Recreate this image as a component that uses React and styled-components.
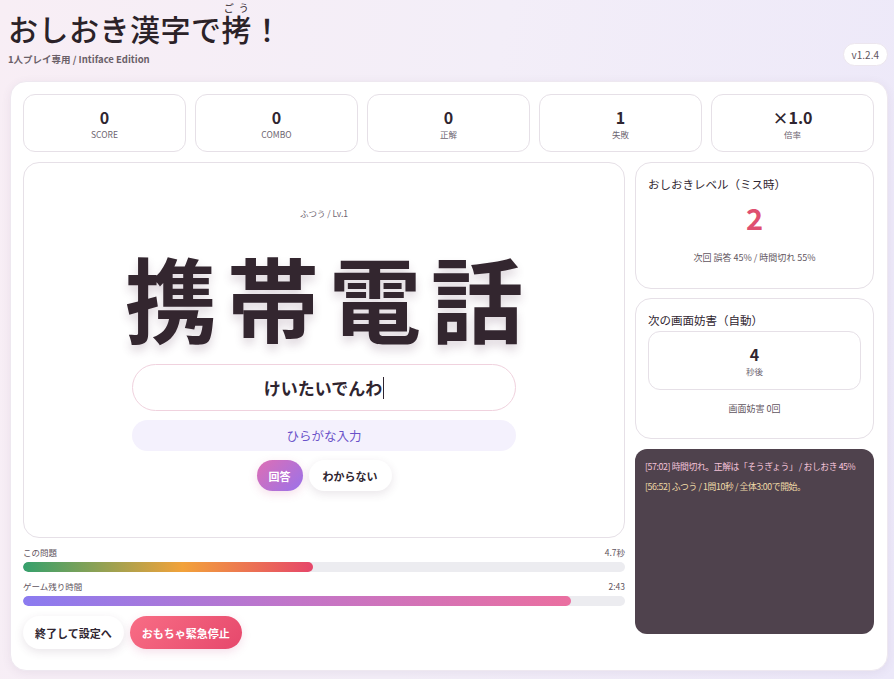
import styled, { createGlobalStyle } from 'styled-components';

const GlobalStyle = createGlobalStyle`
  html, body {
    margin: 0;
    padding: 0;
  }
  body {
    font-family: "Noto Sans CJK JP", "Noto Sans", sans-serif;
    color: #2f2530;
    background: linear-gradient(100deg, #f8eef5 0%, #f3eef8 50%, #ece8f9 100%);
    min-height: 679px;
  }
  * {
    box-sizing: border-box;
  }
`;

const Page = styled.div`
  padding: 0 6px 10px 10px;
`;

const Header = styled.header`
  display: flex;
  justify-content: space-between;
  align-items: flex-end;
  height: 81px;
  padding-bottom: 15px;
`;

const TitleBlock = styled.div`
  margin-left: -2px;
`;

const Title = styled.h1`
  margin: 0;
  font-size: 30px;
  font-weight: 500;
  line-height: 44px;
  letter-spacing: 0.5px;
  color: #2b2228;

  rt {
    font-size: 10px;
    font-weight: 400;
    letter-spacing: 1px;
  }
`;

const Subtitle = styled.div`
  font-size: 9.5px;
  font-weight: 600;
  color: #6a5f68;
  margin-top: 2px;
`;

const Version = styled.div`
  padding: 3px 8px;
  font-size: 10px;
  color: #5f5560;
  background: #fff;
  border: 1px solid #ece6ee;
  border-radius: 12px;
`;

const Card = styled.main`
  background: #fff;
  border-radius: 16px;
  box-shadow: 0 2px 10px rgba(90, 60, 100, 0.08);
  border: 1px solid #eee8f0;
  padding: 12px 13px 21px 12px;
  display: flex;
  flex-direction: column;
  gap: 10px;
`;

const Stats = styled.div`
  display: grid;
  grid-template-columns: repeat(5, 1fr);
  gap: 9px;
`;

const Stat = styled.div`
  height: 58px;
  border: 1px solid #e6e0e7;
  border-radius: 12px;
  display: flex;
  flex-direction: column;
  align-items: center;
  justify-content: center;
  padding-top: 2px;
`;

const StatValue = styled.div`
  font-size: 16px;
  font-weight: 600;
  line-height: 20px;
  color: #2f2530;
`;

const StatLabel = styled.div`
  font-size: 8.5px;
  color: #6d6470;
  line-height: 14px;
`;

const Body = styled.div`
  display: grid;
  grid-template-columns: 1fr 239px;
  gap: 10px;
`;

const LeftCol = styled.div`
  display: flex;
  flex-direction: column;
`;

const GamePanel = styled.section`
  height: 376px;
  border: 1px solid #e6e0e7;
  border-radius: 16px;
  display: flex;
  flex-direction: column;
  align-items: center;
  justify-content: center;
  padding-bottom: 2px;
`;

const Level = styled.div`
  font-size: 8.5px;
  color: #6d6470;
  line-height: 12px;
`;

const Kanji = styled.div`
  font-size: 92px;
  font-weight: 700;
  line-height: 118px;
  letter-spacing: 10px;
  margin-left: 10px;
  margin-top: 18px;
  color: #33262f;
  text-shadow: 0 6px 10px rgba(80, 40, 70, 0.18);
`;

const AnswerInput = styled.div`
  width: 384px;
  height: 47px;
  margin-top: 9px;
  border: 1px solid #f0d2de;
  border-radius: 24px;
  display: flex;
  align-items: center;
  justify-content: center;
  font-size: 17px;
  font-weight: 700;
  color: #2f2530;
`;

const Caret = styled.span`
  display: inline-block;
  width: 1px;
  height: 22px;
  background: #2f2530;
  margin-left: 1px;
`;

const Hint = styled.div`
  width: 384px;
  height: 31px;
  margin-top: 9px;
  border-radius: 16px;
  background: #f4f1fd;
  color: #6a52c9;
  font-size: 12.5px;
  display: flex;
  align-items: center;
  justify-content: center;
`;

const ButtonRow = styled.div`
  display: flex;
  gap: 6px;
  margin-top: 9px;
`;

const Pill = styled.button`
  height: ${(p) => p.$h || 31}px;
  padding: 0 ${(p) => p.$px || 12}px;
  border: none;
  border-radius: 18px;
  font-family: inherit;
  font-size: 11px;
  font-weight: 700;
  cursor: pointer;
  color: ${(p) => (p.$variant === 'plain' ? '#2f2530' : '#fff')};
  background: ${(p) =>
    p.$variant === 'answer'
      ? 'linear-gradient(135deg, #de6fb4 0%, #9a72ea 100%)'
      : p.$variant === 'danger'
      ? 'linear-gradient(135deg, #f86d85 0%, #e6486c 100%)'
      : '#fff'};
  box-shadow: ${(p) =>
    p.$variant === 'plain'
      ? '0 3px 10px rgba(70, 40, 70, 0.12)'
      : '0 3px 10px rgba(200, 80, 140, 0.18)'};
`;

const BarLabel = styled.div`
  display: flex;
  justify-content: space-between;
  font-size: 8.5px;
  color: #5f5560;
  line-height: 12px;
  margin-top: 8px;
  margin-bottom: 4px;
`;

const Track = styled.div`
  height: 10px;
  border-radius: 5px;
  background: #ececf0;
  overflow: hidden;
`;

const Fill = styled.div`
  height: 100%;
  border-radius: 5px;
  background: ${(p) => p.$bg};
`;

const Actions = styled.div`
  display: flex;
  gap: 6px;
  margin-top: 10px;
`;

const RightCol = styled.aside`
  display: flex;
  flex-direction: column;
  gap: 9px;
`;

const SideCard = styled.section`
  height: ${(p) => p.$h}px;
  border: 1px solid #e6e0e7;
  border-radius: 16px;
  padding: 13px 12px 12px;
  display: flex;
  flex-direction: column;
`;

const SideTitle = styled.div`
  font-size: 11.5px;
  color: #2f2530;
  line-height: 16px;
`;

const BigNumber = styled.div`
  text-align: center;
  font-size: 29px;
  font-weight: 600;
  color: #df4f70;
  line-height: 36px;
  margin-top: 7px;
`;

const Note = styled.div`
  text-align: center;
  font-size: 9px;
  color: #5f5560;
  line-height: 12px;
  margin-top: ${(p) => p.$mt || 0}px;
`;

const Countdown = styled.div`
  margin-top: 3px;
  height: 59px;
  border: 1px solid #e6e0e7;
  border-radius: 12px;
  display: flex;
  flex-direction: column;
  align-items: center;
  justify-content: center;
`;

const Log = styled.div`
  height: 185px;
  margin-top: 1px;
  background: #4f424d;
  border-radius: 12px;
  padding: 11px 10px;
  display: flex;
  flex-direction: column;
  gap: 7px;
`;

const LogLine = styled.div`
  font-size: 8.8px;
  letter-spacing: -0.4px;
  line-height: 13px;
  color: ${(p) => p.$color};
  white-space: nowrap;
`;

const stats = [
  { value: '0', label: 'SCORE' },
  { value: '0', label: 'COMBO' },
  { value: '0', label: '正解' },
  { value: '1', label: '失敗' },
  { value: '×1.0', label: '倍率' },
];

const questionLeft = 48.2;
const gameLeft = 91;

export default function App() {
  return (
    <>
      <GlobalStyle />
      <Page>
        <Header>
          <TitleBlock>
            <Title>
              おしおき漢字で<ruby>拷<rt>ごう</rt></ruby>！
            </Title>
            <Subtitle>1人プレイ専用 / Intiface Edition</Subtitle>
          </TitleBlock>
          <Version>v1.2.4</Version>
        </Header>

        <Card>
          <Stats>
            {stats.map((s) => (
              <Stat key={s.label}>
                <StatValue>{s.value}</StatValue>
                <StatLabel>{s.label}</StatLabel>
              </Stat>
            ))}
          </Stats>

          <Body>
            <LeftCol>
              <GamePanel>
                <Level>ふつう / Lv.1</Level>
                <Kanji>携帯電話</Kanji>
                <AnswerInput>
                  けいたいでんわ
                  <Caret />
                </AnswerInput>
                <Hint>ひらがな入力</Hint>
                <ButtonRow>
                  <Pill $variant="answer" $px={12}>回答</Pill>
                  <Pill $variant="plain" $px={14}>わからない</Pill>
                </ButtonRow>
              </GamePanel>

              <BarLabel>
                <span>この問題</span>
                <span>4.7秒</span>
              </BarLabel>
              <Track>
                <Fill
                  style={{ width: `${questionLeft}%` }}
                  $bg="linear-gradient(90deg, #35a06c 0%, #f2a23a 55%, #e6466a 100%)"
                />
              </Track>

              <BarLabel>
                <span>ゲーム残り時間</span>
                <span>2:43</span>
              </BarLabel>
              <Track>
                <Fill
                  style={{ width: `${gameLeft}%` }}
                  $bg="linear-gradient(90deg, #8b7bf0 0%, #c275c8 50%, #ea6fa0 100%)"
                />
              </Track>

              <Actions>
                <Pill $variant="plain" $h={33} $px={12}>終了して設定へ</Pill>
                <Pill $variant="danger" $h={33} $px={12}>おもちゃ緊急停止</Pill>
              </Actions>
            </LeftCol>

            <RightCol>
              <SideCard $h={127}>
                <SideTitle>おしおきレベル（ミス時）</SideTitle>
                <BigNumber>2</BigNumber>
                <Note $mt={17}>次回 誤答 45% / 時間切れ 55%</Note>
              </SideCard>

              <SideCard $h={141}>
                <SideTitle>次の画面妨害（自動）</SideTitle>
                <Countdown>
                  <StatValue>4</StatValue>
                  <StatLabel>秒後</StatLabel>
                </Countdown>
                <Note $mt={13}>画面妨害 0回</Note>
              </SideCard>

              <Log>
                <LogLine $color="#f4c2d9">
                  [57:02] 時間切れ。正解は「そうぎょう」 / おしおき 45%
                </LogLine>
                <LogLine $color="#f0dba8">
                  [56:52] ふつう / 1問10秒 / 全体3:00で開始。
                </LogLine>
              </Log>
            </RightCol>
          </Body>
        </Card>
      </Page>
    </>
  );
}
